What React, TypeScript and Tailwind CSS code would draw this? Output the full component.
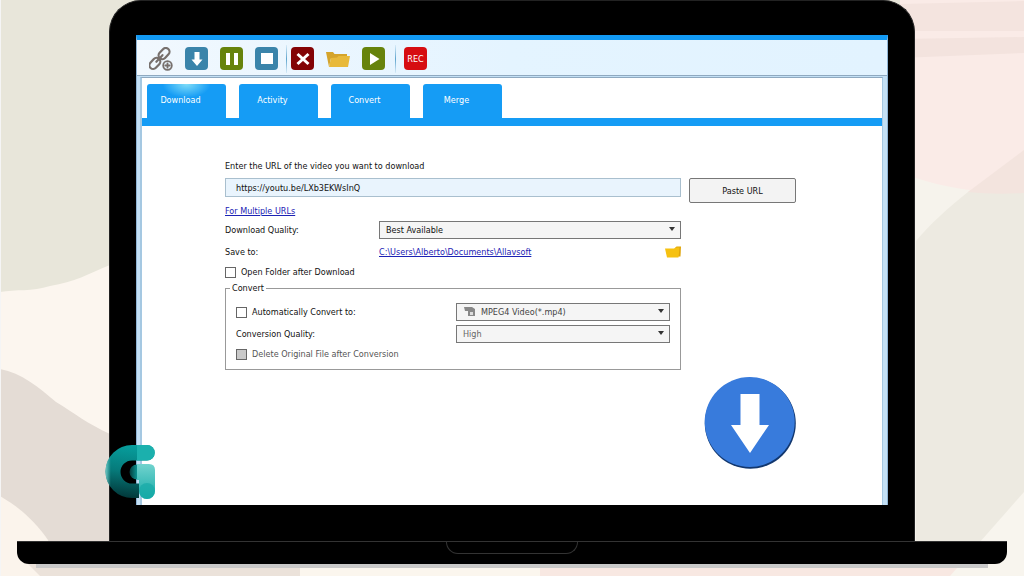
import { useState } from 'react'
import type { ReactNode } from 'react'

const tabs = ['Download', 'Activity', 'Convert', 'Merge']

function Backdrop() {
  return (
    <svg className="absolute inset-0 h-full w-full" viewBox="0 0 1024 576" preserveAspectRatio="none" aria-hidden="true">
      <rect width="1024" height="576" fill="#e8e6da" />
      <path d="M0 292C16 289 32 292 50 286C75 282 88 274 110 265V576H0Z" fill="#fcf6ef" />
      <path d="M0 369C22 373 38 387 56 402C74 413 88 424 110 434V576H0Z" fill="#e4dcd5" />
      <path d="M0 496C20 508 34 520 48 540L60 576H0Z" fill="#fbf4ec" />
      <path d="M24 560H300V576H40Z" fill="#ebe2da" />
      <path d="M900 0H1024V576H900Z" fill="#f6f3ec" />
      <path d="M1024 150C1004 162 985 178 968 192C948 208 930 224 916 241V576H1024Z" fill="#edeae1" />
      <path d="M900 0H1024V193C985 194 945 188 916 178H900Z" fill="#faebe7" />
      <path d="M900 4L1024 1V31H900Z" fill="#f4e4df" />
      <path d="M900 39L1024 37V53L900 58Z" fill="#f3e3de" />
      <path d="M1024 150L968 192C988 194 1005 194 1024 193Z" fill="#f3e4de" />
      <rect x="300" y="560" width="240" height="16" fill="#fbf6ee" />
      <rect x="540" y="560" width="420" height="16" fill="#f8e8e2" />
      <path d="M950 576L1024 492V576Z" fill="#f8f5ee" />
      <rect width="1" height="576" fill="#f5f5f5" />
    </svg>
  )
}

function LinkAddIcon() {
  return (
    <svg className="h-6 w-6" viewBox="0 0 24 24" fill="none" stroke="#77706d" strokeWidth="2.200" strokeLinecap="round">
      <g transform="rotate(-47 11 12)">
        <rect x="-2" y="7.500" width="12.500" height="7.500" rx="3.750" />
        <rect x="11.500" y="7.500" width="12.500" height="7.500" rx="3.750" />
        <path d="M6.500 11.200h9" />
      </g>
      <circle cx="18.500" cy="18.500" r="6" fill="#eaf5fd" stroke="none" />
      <circle cx="18.500" cy="18.500" r="4.300" strokeWidth="1.800" />
      <path d="M18.500 16.300v4.400M16.300 18.500h4.400" strokeWidth="1.800" />
    </svg>
  )
}

function ToolButton({ label, className, children }: { label: string; className: string; children: ReactNode }) {
  return (
    <button aria-label={label} className={`flex h-[23px] w-[23px] shrink-0 items-center justify-center rounded-[4px] text-white ${className}`}>
      {children}
    </button>
  )
}

function Separator() {
  return <span className="h-7 w-px shrink-0 bg-linear-to-b from-[#d8ecf8] via-[#5ea5cd] to-[#d8ecf8]" />
}

function Toolbar() {
  return (
    <div className="flex h-[36px] items-center border-b border-[#8fa9c0] bg-linear-to-r from-[#f1f8fe] via-[#e4f4ff] to-[#e2f3ff] pt-0.5 pl-3">
      <button aria-label="Add link" className="mr-3 h-6 w-6 shrink-0">
        <LinkAddIcon />
      </button>
      <ToolButton label="Start" className="mr-3 bg-[#3a84aa]">
        <svg className="h-4 w-4" viewBox="0 0 16 16" fill="currentColor">
          <path d="M5.500 1h5v7.500h3L8 15 2.500 8.500h3z" />
        </svg>
      </ToolButton>
      <ToolButton label="Pause" className="mr-3 bg-[#67830c]">
        <svg className="h-4 w-4" viewBox="0 0 16 16" fill="currentColor">
          <path d="M2 2h4v12H2zM10 2h4v12h-4z" />
        </svg>
      </ToolButton>
      <ToolButton label="Stop" className="mr-2 bg-[#3a84aa]">
        <span className="h-[11px] w-3 bg-white" />
      </ToolButton>
      <Separator />
      <ToolButton label="Delete" className="mr-3 ml-1 bg-[#830305]">
        <svg className="h-4 w-4" viewBox="0 0 16 16" stroke="currentColor" strokeWidth="3">
          <path d="M2.500 3l11 10M13.500 3l-11 10" />
        </svg>
      </ToolButton>
      <button aria-label="Open folder" className="mr-3 h-6 w-6 shrink-0">
        <svg className="h-6 w-6" viewBox="0 0 24 24">
          <path d="M0 5h7l1.500 2H21v4H5L3 20z" fill="#d5a42b" />
          <path d="M5 11l6-.5 1.500-1.500H24L22 20H3z" fill="#e8b93a" />
        </svg>
      </button>
      <ToolButton label="Play" className="mr-2.5 bg-[#67830c]">
        <svg className="h-4 w-4" viewBox="0 0 16 16" fill="currentColor">
          <path d="M4 2l9.500 6L4 14z" />
        </svg>
      </ToolButton>
      <Separator />
      <ToolButton label="Record" className="ml-2 bg-[#d60d11] text-[9px]">
        REC
      </ToolButton>
    </div>
  )
}

function Caret() {
  return (
    <svg className="pointer-events-none absolute top-1.5 right-[5px] h-1 w-2" viewBox="0 0 8 4" fill="#333">
      <path d="M1 0h6L4 4z" />
    </svg>
  )
}

function Checkbox({ id, label, muted = false }: { id: string; label: string; muted?: boolean }) {
  return (
    <div className="flex h-[18px] items-center gap-[5px]">
      <input
        id={id}
        type="checkbox"
        disabled={muted}
        className={`h-[11px] w-[11px] appearance-none border border-[#666] checked:bg-[#159cf5] ${muted ? 'bg-[#c9c9c9]' : 'bg-white'}`}
      />
      <label htmlFor={id} className={muted ? 'text-[#555]' : ''}>
        {label}
      </label>
    </div>
  )
}

function DownloadForm() {
  const [url, setUrl] = useState('https://youtu.be/LXb3EKWsInQ')

  return (
    <form className="flex gap-2 pt-8 pr-[86px] pl-[83px]" onSubmit={(e) => e.preventDefault()}>
      <div className="min-w-0 flex-1">
        <label htmlFor="url" className="block h-5 leading-4">
          Enter the URL of the video you want to download
        </label>
        <input
          id="url"
          value={url}
          onChange={(e) => setUrl(e.target.value)}
          className="block h-[19px] w-full border border-[#a9bfce] bg-[#e9f4fd] px-2.5"
        />
        <div className="flex h-6 items-center pt-1">
          <a href="#multiple" className="text-[#1c22b4] underline">For Multiple URLs</a>
        </div>
        <div className="flex items-center">
          <label htmlFor="quality" className="w-[154px]">Download Quality:</label>
          <div className="relative flex-1">
            <select id="quality" className="block h-[18px] w-full appearance-none border border-[#777] bg-[#f5f5f5] px-1.5">
              <option>Best Available</option>
            </select>
            <Caret />
          </div>
        </div>
        <div className="flex h-6 items-center pt-0.5">
          <span className="w-[154px]">Save to:</span>
          <a href="#folder" className="text-[#1c22b4] underline">C:\Users\Alberto\Documents\Allavsoft</a>
          <button aria-label="Choose folder" className="ml-auto">
            <svg className="h-3 w-4" viewBox="0 0 16 12">
              <path d="M10 2l1.500-1.500H16L15.500 10.500H12z" fill="#e0a50b" />
              <path d="M0 2.500L9 2.500L10.500 1.500H14.500L13.500 11.500H2z" fill="#f6c111" />
            </svg>
          </button>
        </div>
        <Checkbox id="open" label="Open Folder after Download" />
        <fieldset className="border border-[#999] px-2.5 pb-1.5">
          <legend className="-ml-1.5 h-[14px] px-0.5 leading-[14px]">Convert</legend>
          <div className="flex items-center pt-2">
            <div className="w-[220px]">
              <Checkbox id="auto" label="Automatically Convert to:" />
            </div>
            <div className="relative flex-1">
              <select aria-label="Format" className="block h-[18px] w-full appearance-none border border-[#777] bg-[#f5f5f5] pl-6 text-[#444]">
                <option>MPEG4 Video(*.mp4)</option>
              </select>
              <svg className="pointer-events-none absolute top-1 left-2 h-2.5 w-3" viewBox="0 0 12 10" fill="#888">
                <path d="M0 0h8l3 2v7H4V4H1z" />
                <path d="M6 5h3v3H6z" fill="#ddd" />
              </svg>
              <Caret />
            </div>
          </div>
          <div className="flex items-center pt-1">
            <label htmlFor="conversion" className="w-[220px]">Conversion Quality:</label>
            <div className="relative flex-1">
              <select id="conversion" className="block h-[18px] w-full appearance-none border border-[#777] bg-[#f5f5f5] px-1.5 text-[#666]">
                <option>High</option>
              </select>
              <Caret />
            </div>
          </div>
          <div className="pt-0.5">
            <Checkbox id="delete" label="Delete Original File after Conversion" muted />
          </div>
        </fieldset>
      </div>
      <div className="flex w-[107px] flex-col pt-5">
        <button className="h-[25px] rounded-[2px] border border-[#777] bg-[#f3f3f3]">Paste URL</button>
        <button aria-label="Download" className="mt-[174px] self-end">
          <svg className="h-[92px] w-[92px]" viewBox="0 0 92 92">
            <circle cx="46.300" cy="46.300" r="45.500" fill="#12376e" />
            <circle cx="45.700" cy="45" r="45" fill="#387bdc" />
            <path d="M36.500 17h19v31H65L46 76 27 48h9.500z" fill="#fff" />
          </svg>
        </button>
      </div>
    </form>
  )
}

function TealLogo() {
  return (
    <svg className="absolute bottom-1.5 -left-8 h-[54px] w-[50px]" viewBox="0 0 50 54" aria-hidden="true">
      <defs>
        <linearGradient id="ring" x1="0.600" y1="0" x2="0.500" y2="1">
          <stop offset="0" stopColor="#079f9e" />
          <stop offset="0.500" stopColor="#067b7b" />
          <stop offset="1" stopColor="#02383a" />
        </linearGradient>
        <linearGradient id="edge" x1="0" y1="0" x2="1" y2="0">
          <stop offset="0" stopColor="#6fc9c6" />
          <stop offset="0.200" stopColor="#6fc9c6" stopOpacity="0" />
        </linearGradient>
        <linearGradient id="stem" x1="0" y1="0" x2="0" y2="1">
          <stop offset="0" stopColor="#71d3ce" />
          <stop offset="1" stopColor="#16aaa7" />
        </linearGradient>
        <linearGradient id="dot" x1="0" y1="0" x2="1" y2="0">
          <stop offset="0" stopColor="#043c3c" />
          <stop offset="1" stopColor="#0b9290" />
        </linearGradient>
      </defs>
      <path d="M27 0H42A7.500 7.500 0 0 1 42 15.500H27A11 11 0 0 0 27 38.500H34V53H27A26.500 26.500 0 0 1 27 0Z" fill="url(#ring)" />
      <path d="M27 0A26.500 26.500 0 0 0 27 53V38.500A11 11 0 0 1 27 15.500Z" fill="url(#edge)" />
      <path d="M32 0H42A7.500 7.500 0 0 1 42 15.500H32Z" fill="#1bb0ad" />
      <path d="M32 19.500A7.500 7.500 0 0 0 32 34.500Z" fill="url(#dot)" />
      <path d="M32 19H44Q50 19 50 25V46A8 8 0 0 1 34 46V35H32Z" fill="url(#stem)" />
      <path d="M34 46A8 8 0 0 1 50 46A8 8 0 0 1 34 46Z" fill="#16aaa7" opacity="0.700" />
    </svg>
  )
}

export default function App() {
  const [active, setActive] = useState('Download')

  return (
    <main className="relative flex min-h-screen flex-col font-['DejaVu_Sans_Condensed','DejaVu_Sans',sans-serif] text-[9px] leading-[12px] text-[#111]">
      <Backdrop />
      <div className="relative mx-[109px] flex flex-1 flex-col rounded-t-[32px] border border-b-0 border-[#222] bg-black px-[26px] pt-[34px] pb-9">
        <div className="relative flex flex-1 flex-col border-x border-t-5 border-x-[#8fb4d4] border-t-[#129af4] bg-[#c3e0f5]">
          <Toolbar />
          <div className="mt-px mr-1 ml-[3px] flex flex-1 flex-col border-t border-r border-l-2 border-[#8fa9c0] border-x-[#a5c8e2] bg-white">
            <nav className="flex gap-[13px] border-b-8 border-[#159cf5] pt-1.5 pl-[5px]">
              {tabs.map((tab) => (
                <button
                  key={tab}
                  onClick={() => setActive(tab)}
                  className={`h-[34px] w-[79px] rounded-t-[3px] pr-3 pb-0.5 text-white ${
                    active === tab
                      ? 'bg-[#159cf5] bg-[radial-gradient(ellipse_24px_14px_at_50%_0,#7fdcf8,transparent)]'
                      : 'bg-[#159cf5]'
                  }`}
                >
                  {tab}
                </button>
              ))}
            </nav>
            <DownloadForm />
          </div>
          <TealLogo />
        </div>
      </div>
      <div className="relative mx-[17px] h-[23px] rounded-b-xl border-t border-[#333] bg-black">
        <div className="mx-auto h-3 w-[132px] rounded-b-xl border border-t-0 border-[#333]" />
      </div>
      <div className="relative mx-9 mb-2 h-1 bg-[#c9c9c9]" />
    </main>
  )
}
